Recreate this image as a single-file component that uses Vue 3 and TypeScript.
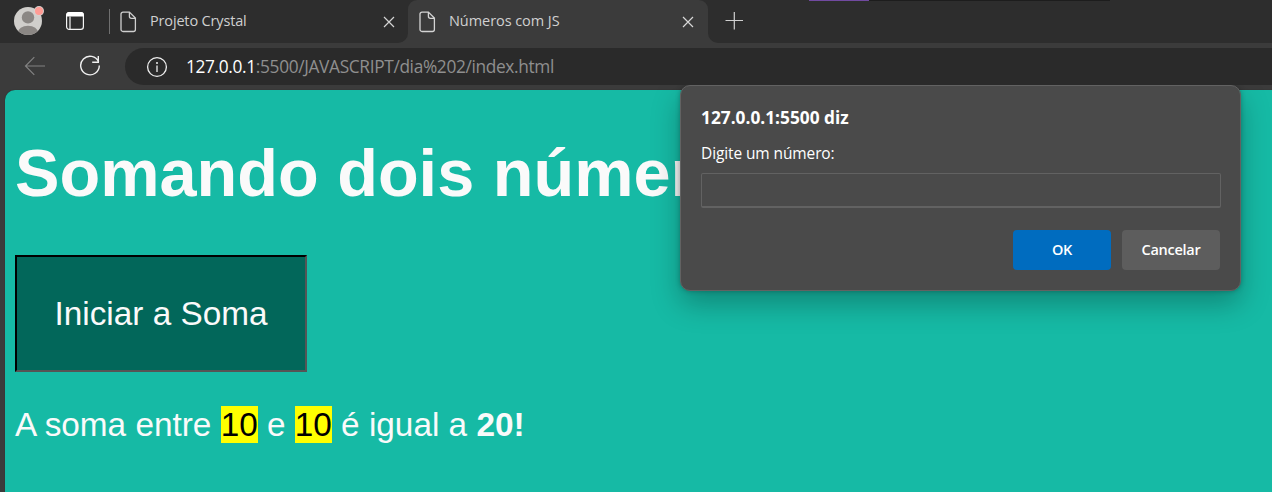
<script setup lang="ts">
import { ref } from 'vue'

interface Addend { id: number; value: number; joiner: string }

const host = '127.0.0.1'
const path = ':5500/JAVASCRIPT/dia%202/index.html'
const answer = ref('')
const addends: Addend[] = [
  { id: 1, value: 10, joiner: ' e ' },
  { id: 2, value: 10, joiner: ' é igual a ' },
]
const total = addends.reduce((sum, a) => sum + a.value, 0)
</script>

<template>
  <div class="browser">
    <header class="tabs">
      <div class="tabs-left">
        <svg class="avatar" width="32" height="32" viewBox="0 0 32 32">
          <defs><clipPath id="face"><circle cx="15" cy="16" r="14" /></clipPath></defs>
          <circle cx="15" cy="16" r="14" fill="#d0cecb" />
          <g clip-path="url(#face)" fill="#8b8784">
            <circle cx="15" cy="12.4" r="6.2" />
            <ellipse cx="15" cy="28" rx="10.2" ry="7.3" />
          </g>
          <circle cx="26" cy="6" r="5" fill="#d8d0cd" />
          <circle cx="26" cy="6" r="4" fill="#ff9b94" />
        </svg>
        <svg class="workspace" width="20" height="20" viewBox="0 0 20 20">
          <rect x="1.6" y="1.6" width="16.8" height="16.8" rx="2.6" fill="none" stroke="#f4f4f4" stroke-width="1.2" />
          <path d="M1.2 5.5V4a3 3 0 0 1 3-3h11.6a3 3 0 0 1 3 3v1.5z" fill="#fff" />
          <path d="M5 5.5v12.7" stroke="#f4f4f4" stroke-width="1.2" />
        </svg>
        <span class="divider"></span>
        <svg class="file" width="17" height="22" viewBox="0 0 17 22">
          <path d="M3 1.1h6.4l6 6v11.4a2 2 0 0 1-2 2H3a2 2 0 0 1-2-2V3.1a2 2 0 0 1 2-2zM9.4 1.3v4a2 2 0 0 0 2 2h4" fill="none" stroke="#cfcfcf" stroke-width="1.3" />
        </svg>
        <span class="tab-title first">Projeto Crystal</span>
        <svg class="close" width="12" height="12" viewBox="0 0 12 12"><path d="M1 1l10 10M11 1L1 11" stroke="#d4d4d4" stroke-width="1.2" /></svg>
      </div>
      <div class="tab-slot">
        <div class="tab-active">
          <svg class="file" width="17" height="22" viewBox="0 0 17 22">
            <path d="M3 1.1h6.4l6 6v11.4a2 2 0 0 1-2 2H3a2 2 0 0 1-2-2V3.1a2 2 0 0 1 2-2zM9.4 1.3v4a2 2 0 0 0 2 2h4" fill="none" stroke="#d4d4d4" stroke-width="1.3" />
          </svg>
          <span class="tab-title second">Números com JS</span>
          <svg class="close" width="12" height="12" viewBox="0 0 12 12"><path d="M1 1l10 10M11 1L1 11" stroke="#d8d8d8" stroke-width="1.2" /></svg>
        </div>
      </div>
      <div class="tabs-right">
        <svg class="plus" width="18" height="18" viewBox="0 0 18 18"><path d="M0.5 8.5h17.5M9.3 0v17.5" stroke="#d0d0d0" stroke-width="1.2" /></svg>
        <span class="edge purple"></span><span class="edge dark"></span>
      </div>
    </header>

    <nav class="toolbar">
      <svg class="back" width="22" height="20" viewBox="0 0 22 20"><path d="M21 10H1.5M10.3 1.2L1.5 10l8.8 8.8" fill="none" stroke="#828282" stroke-width="1.2" /></svg>
      <svg class="reload" width="22" height="22" viewBox="0 0 22 22"><path d="M19.6 7A9.3 9.3 0 1 0 20.3 10.5M19.3 1v6.200H13.2" fill="none" stroke="#f0f0f0" stroke-width="1.4" /></svg>
      <div class="address">
        <svg class="info" width="22" height="22" viewBox="0 0 22 22">
          <circle cx="11" cy="11" r="9.4" fill="none" stroke="#eee" stroke-width="1.3" />
          <circle cx="11" cy="7" r="1" fill="#eee" /><path d="M11 9.5v6.5" stroke="#eee" stroke-width="1.3" />
        </svg>
        <span class="url"><span class="host">{{ host }}</span><span class="path">{{ path }}</span></span>
      </div>
    </nav>

    <main class="page">
      <h1>Somando dois números</h1>
      <button class="start">Iniciar a Soma</button>
      <p class="result">A soma entre <template v-for="a in addends" :key="a.id"><mark>{{ a.value }}</mark>{{ a.joiner }}</template><strong>{{ total }}!</strong></p>
    </main>

    <form class="dialog" @submit.prevent>
      <h2>127.0.0.1:5500 diz</h2>
      <label for="number">Digite um número:</label>
      <input id="number" v-model="answer" type="text" autocomplete="off" />
      <div class="actions">
        <button class="ok" type="submit">OK</button>
        <button class="cancel" type="button">Cancelar</button>
      </div>
    </form>
  </div>
</template>

<style>
body { margin: 0; background: #3b3b3b; overflow: hidden; }
</style>

<style scoped>
* { box-sizing: border-box; }
svg { display: block; flex: none; }
.browser { position: relative; width: 1272px; height: 492px; overflow: hidden; background: #3b3b3b; font-family: "Open Sans", "Noto Sans", sans-serif; display: flex; flex-direction: column; }
.tabs { display: flex; height: 43px; flex: none; }
.tabs-left { width: 408px; height: 43px; background: #2d2d2d; border-bottom-right-radius: 10px; display: flex; align-items: flex-start; }
.avatar { margin: 5px 0 0 13px; }
.workspace { margin: 11px 0 0 20px; }
.divider { width: 1px; height: 25px; background: #707070; margin: 9px 0 0 24px; }
.file { margin: 11px 0 0 10px; }
.tab-title { flex: none; color: #d0d0d0; font-size: 14.5px; line-height: 20px; margin-top: 11px; white-space: nowrap; }
.first { width: 107px; margin-left: 13px; letter-spacing: -0.16px; }
.close { margin: 16px 0 0 126px; }
.tab-slot { width: 300px; background: linear-gradient(#2d2d2d 20px, #3b3b3b 20px); }
.tab-active { height: 43px; background: #3b3b3b; border-radius: 9px 9px 0 0; display: flex; align-items: flex-start; }
.tab-active .file { margin-left: 11px; }
.second { width: 120px; margin-left: 13px; letter-spacing: -0.06px; }
.tab-active .close { margin-left: 113px; }
.tabs-right { flex: 1; display: flex; align-items: flex-start; background: #2d2d2d; border-bottom-left-radius: 10px; }
.plus { margin: 12px 0 0 17px; }
.edge { height: 1px; }
.purple { width: 60px; margin-left: 66px; background: #714aa0; }
.dark { width: 241px; background: #1d1d1d; }
.toolbar { height: 47px; flex: none; display: flex; padding-top: 5px; }
.back { margin: 8px 0 0 24px; }
.reload { margin: 7px 0 0 33px; }
.address { flex: 1; height: 37px; margin-left: 24px; border-radius: 18.5px 0 0 18.5px; background: #2a2a2a; display: flex; align-items: center; }
.info { margin: 0 0 0 21px; }
.url { margin: 0 0 0 18px; font-size: 17.3px; line-height: 24px; white-space: nowrap; letter-spacing: -0.34px; }
.host { color: #fff; }
.path { color: #8f8f8f; }
.page { flex: 1; margin-left: 5px; padding: 0 10px; border-top-left-radius: 10px; background: #16baa5; color: #fafafa; font-family: "Liberation Sans", Arial, sans-serif; font-size: 33.333px; box-shadow: 0 0 1px #222; }
h1 { margin: 45px 0 0; font-size: 66.667px; line-height: 76px; height: 76px; font-weight: 700; white-space: nowrap; }
.start { display: block; width: 292px; height: 117px; margin: 44px 0 0; padding: 0; background: #02675a; color: #fafafa; border: 2px solid; border-color: #000 #555 #555 #000; font: inherit; }
.result { margin: 34px 0 0; line-height: 37px; white-space: nowrap; }
mark { background: #ff0; color: #000; }
.dialog { position: absolute; left: 680px; top: 85px; width: 561px; height: 206px; padding: 20px 20px 0; border: 1px solid #626262; border-radius: 10px; background: #4a4a4a; color: #fff; box-shadow: 0 13px 29px rgba(0, 0, 0, .27), 0 0 5px rgba(0, 0, 0, .25); clip-path: inset(0 -50px -60px -50px); display: flex; flex-direction: column; }
h2 { margin: 0; font-size: 17.3px; line-height: 24px; font-weight: 700; letter-spacing: 0; white-space: nowrap; }
label { margin-top: 13px; font-size: 15.5px; line-height: 20px; letter-spacing: -0.11px; white-space: nowrap; }
input { width: 520px; height: 35px; margin: 10px 0 0; flex: none; border: 1px solid #626262; border-bottom-width: 2px; border-radius: 2px; background: #4a4a4a; color: #fff; outline: none; }
.actions { display: flex; justify-content: flex-end; gap: 11px; margin-top: 22px; }
.actions button { width: 98px; height: 40px; padding: 0 0 2px; border: 0; border-radius: 4px; color: #fff; font: 600 14.5px "Open Sans", sans-serif; letter-spacing: -0.25px; }
.actions .ok { background: #006cbf; }
.actions .cancel { background: #5d5d5d; }
</style>
